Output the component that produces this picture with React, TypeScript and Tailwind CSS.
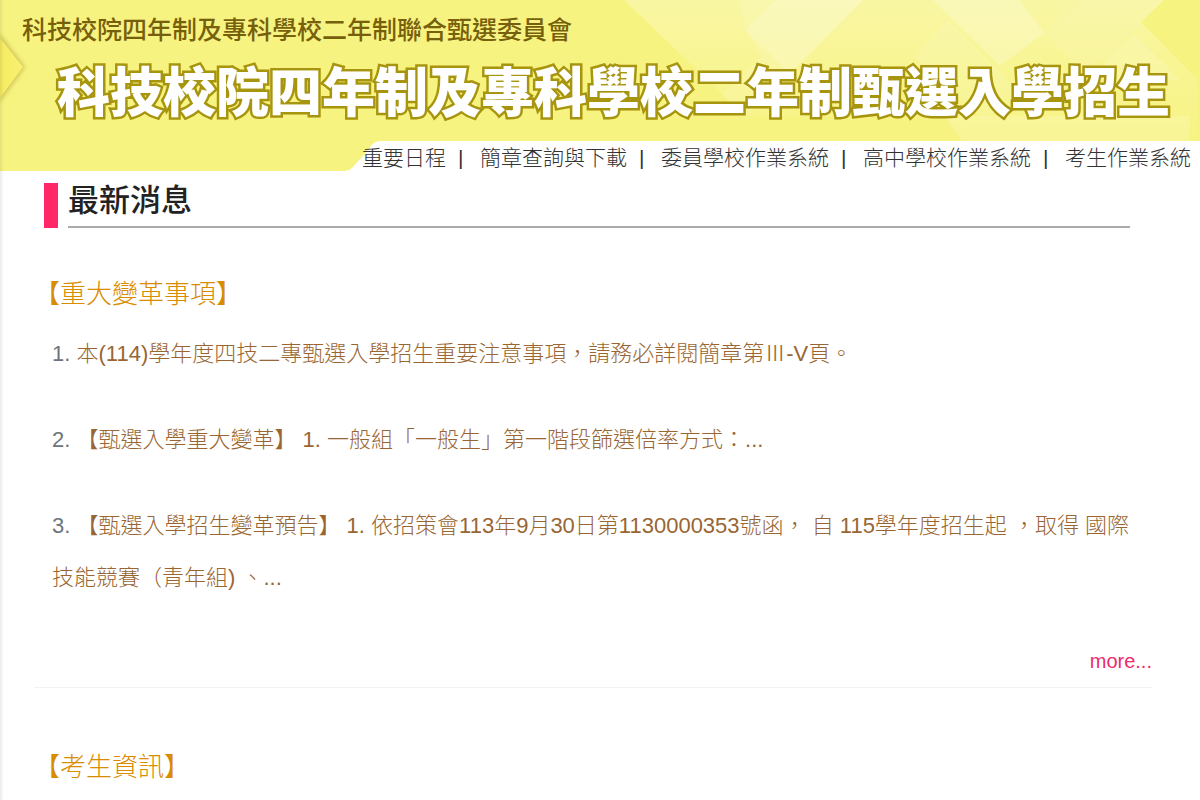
import React from 'react';

const navLinks = ['重要日程', '簡章查詢與下載', '委員學校作業系統', '高中學校作業系統', '考生作業系統'];

const news = [
  '本(114)學年度四技二專甄選入學招生重要注意事項，請務必詳閱簡章第Ⅲ-V頁。',
  '【甄選入學重大變革】 1. 一般組「一般生」第一階段篩選倍率方式：...',
  '【甄選入學招生變革預告】 1. 依招策會113年9月30日第1130000353號函， 自 115學年度招生起 ，取得 國際技能競賽（青年組) 、...',
];

const BannerArt = () => (
  <svg
    className="absolute inset-0 -z-10 h-full w-full"
    viewBox="0 0 1200 174"
    preserveAspectRatio="none"
    aria-hidden="true"
  >
    <defs>
      <linearGradient id="fade" x1="0" y1="0" x2="0" y2="1">
        <stop offset="0" stopColor="#fff" stopOpacity="0.28" />
        <stop offset="1" stopColor="#fff" stopOpacity="0.02" />
      </linearGradient>
      <linearGradient id="arrow" x1="0" y1="0" x2="1" y2="0">
        <stop offset="0" stopColor="#f6ec62" />
        <stop offset="1" stopColor="#f8f070" />
      </linearGradient>
      <filter id="soft" x="-50%" y="-50%" width="200%" height="200%">
        <feGaussianBlur stdDeviation="2" />
      </filter>
    </defs>
    <path d="M0 0H1200V141H380C372 141 369 150 364 155L352 168Q349 171 345 171H0Z" fill="#f7f380" />
    <path d="M624 0H1164L1141 22L1198 80V141H962L900 78L862 116H745Z" fill="url(#fade)" />
    <path d="M740 0H863L745 118L722 94L762 56L745 30Z" fill="#fff" opacity="0.12" />
    <path d="M745 30L776 0H863L790 74Z" fill="#fff" opacity="0.16" />
    <path d="M933 0H1020L1044 33L1000 66Z" fill="#fff" opacity="0.22" />
    <path d="M948 20L1022 94L984 120L914 56Z" fill="#fff" opacity="0.1" />
    <path d="M1044 33L1078 0H1164L1110 56L1080 70Z" fill="#fff" opacity="0.08" />
    <path d="M1110 56L1135 35L1180 80H1090Z" fill="#fff" opacity="0.14" />
    <path d="M1050 116H1190V141H962L945 116Z" fill="#fff" opacity="0.16" />
    <path d="M0 34L25 67L0 102Z" fill="#a99a30" opacity="0.5" filter="url(#soft)" />
    <path d="M0 38L23 67L0 98Z" fill="url(#arrow)" />
  </svg>
);

const SiteHeader = () => (
  <header className="relative isolate">
    <BannerArt />
    <div className="pt-3 pb-4 whitespace-nowrap">
      <p className="pl-[22px] text-[25px] leading-9 font-medium text-[#77600c]">
        科技校院四年制及專科學校二年制聯合甄選委員會
      </p>
      <h1 className="mt-[14px] pl-[57px] text-[53px] leading-[64px] font-black text-white [-webkit-text-stroke:5px_#a8950f] [paint-order:stroke_fill] [stroke-linejoin:round]">
        科技校院四年制及專科學校二年制甄選入學招生
      </h1>
    </div>
    <nav className="flex h-8 items-center justify-end pr-[9px] text-[21px] font-light whitespace-nowrap text-[#333]">
      {navLinks.map((label, i) => (
        <React.Fragment key={label}>
          {i > 0 && <span className="w-[34px] pl-3 font-normal">|</span>}
          <a href="#">{label}</a>
        </React.Fragment>
      ))}
    </nav>
  </header>
);

const SectionTitle = ({ children }: { children: React.ReactNode }) => (
  <h3 className="text-[26px] leading-[52px] font-light text-[#d98c00]">{children}</h3>
);

const App = () => {
  return (
    <div
      lang="zh-TW"
      className="relative min-h-screen overflow-hidden bg-white font-['Liberation_Sans','Noto_Sans_CJK_TC',sans-serif]"
    >
      <SiteHeader />
      <div className="absolute inset-y-0 left-0 w-1 bg-linear-to-r from-black/8 to-transparent" />

      <main className="pr-12 pl-[34px]">
        <div className="mt-[9px] mr-[22px] ml-[10px] flex h-[45px] gap-[10px]">
          <span className="w-[14px] bg-[#ff2768]" />
          <h2 className="flex-1 border-b-2 border-[#aaa] text-[31px] leading-9 font-medium text-[#222]">
            最新消息
          </h2>
        </div>

        <section className="mt-10 border-b border-[#f3f3f3]">
          <SectionTitle>【重大變革事項】</SectionTitle>
          <ol className="mt-2 pr-1 pl-[18px] text-[22px] leading-[52px] text-[#6c757d]">
            {news.map((item, i) => (
              <li key={i} className="mb-[34px]">
                {i + 1}.{' '}
                <a href="#" className="font-light text-[#996633]">
                  {item}
                </a>
              </li>
            ))}
          </ol>
          <div className="pt-[9px] pb-3 text-right text-[20px] leading-7">
            <a href="#" className="text-[#ee2b6c]">
              more...
            </a>
          </div>
        </section>

        <section className="mt-[53px]">
          <SectionTitle>【考生資訊】</SectionTitle>
        </section>
      </main>
    </div>
  );
};

export default App;
